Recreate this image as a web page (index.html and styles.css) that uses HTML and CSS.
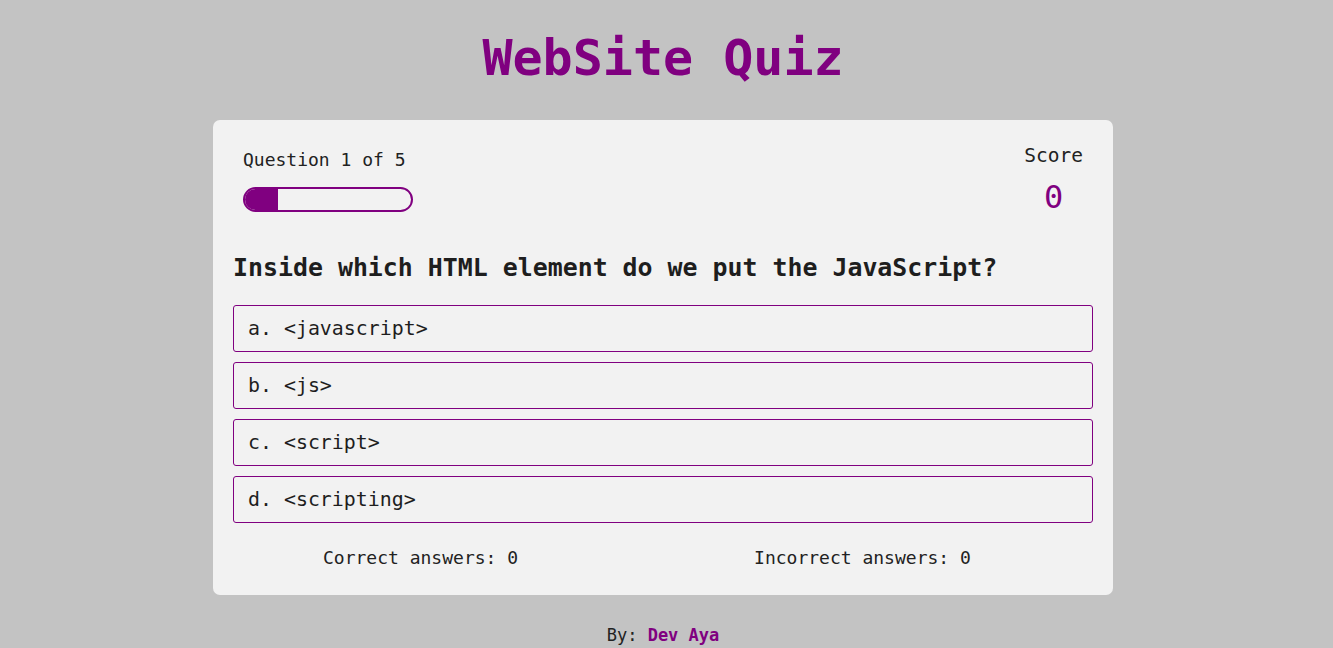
FILE: index.html
```html
<!DOCTYPE html>
<html lang="en">
<head>
<meta charset="utf-8">
<title>WebSite Quiz</title>
<link rel="stylesheet" href="styles.css">
</head>
<body>
  <h1 class="title">WebSite Quiz</h1>
  <main class="card">
    <div class="card-header">
      <div class="progress-info">
        <p class="progress-text">Question 1 of 5</p>
        <div class="progress-bar"><div class="progress-fill" style="width: 20%"></div></div>
      </div>
      <div class="score">
        <p class="score-label">Score</p>
        <p class="score-value">0</p>
      </div>
    </div>
    <h2 class="question">Inside which HTML element do we put the JavaScript?</h2>
    <ul class="options">
      <li class="option">a. &lt;javascript&gt;</li>
      <li class="option">b. &lt;js&gt;</li>
      <li class="option">c. &lt;script&gt;</li>
      <li class="option">d. &lt;scripting&gt;</li>
    </ul>
    <div class="tally">
      <span class="tally-item">Correct answers: 0</span>
      <span class="tally-item">Incorrect answers: 0</span>
    </div>
  </main>
  <footer class="footer">By: <span class="author">Dev Aya</span></footer>
</body>
</html>
```
FILE: styles.css
```css
* { box-sizing: border-box; }
html, body { margin: 0; padding: 0; }
body {
  background: #c3c3c3;
  font-family: "DejaVu Sans Mono", "Liberation Mono", monospace;
  color: #222;
  padding-right: 7px;
}
p { margin: 0; }
.title {
  margin: 0;
  padding-top: 30px;
  height: 120px;
  text-align: center;
  color: #800080;
  font-size: 50px;
  line-height: 56px;
  font-weight: bold;
}
.card {
  width: 900px;
  margin: 0 auto;
  background: #f2f2f2;
  border-radius: 7px;
  padding: 20px 20px 26px;
}
.card-header {
  display: flex;
  justify-content: space-between;
  padding: 10px 10px 0;
}
.progress-text {
  font-size: 18px;
  line-height: 20px;
  margin-bottom: 17px;
}
.progress-bar {
  width: 170px;
  height: 25px;
  border: 2px solid #800080;
  border-radius: 13px;
  overflow: hidden;
}
.progress-fill {
  height: 100%;
  background: #800080;
}
.score {
  text-align: center;
  margin-top: -6px;
}
.score-label {
  font-size: 19.5px;
  line-height: 24px;
}
.score-value {
  color: #800080;
  font-size: 32px;
  line-height: 40px;
  margin-top: 9px;
}
.question {
  margin: 36px 0 0;
  font-size: 24.9px;
  line-height: 30px;
  font-weight: bold;
  color: #1e1e1e;
}
.options {
  list-style: none;
  margin: 22px 0 0;
  padding: 0;
  display: flex;
  flex-direction: column;
  gap: 10px;
}
.option {
  height: 47px;
  border: 1px solid #800080;
  border-radius: 3px;
  padding: 0 14px;
  display: flex;
  align-items: center;
  font-size: 19.9px;
  color: #1e1e1e;
}
.tally {
  display: flex;
  padding-left: 90px;
  gap: 236px;
  margin-top: 24px;
  font-size: 18px;
  line-height: 22px;
}
.footer {
  text-align: center;
  margin-top: 29px;
  font-size: 17px;
  line-height: 22px;
}
.author {
  color: #800080;
  font-weight: bold;
}
```
